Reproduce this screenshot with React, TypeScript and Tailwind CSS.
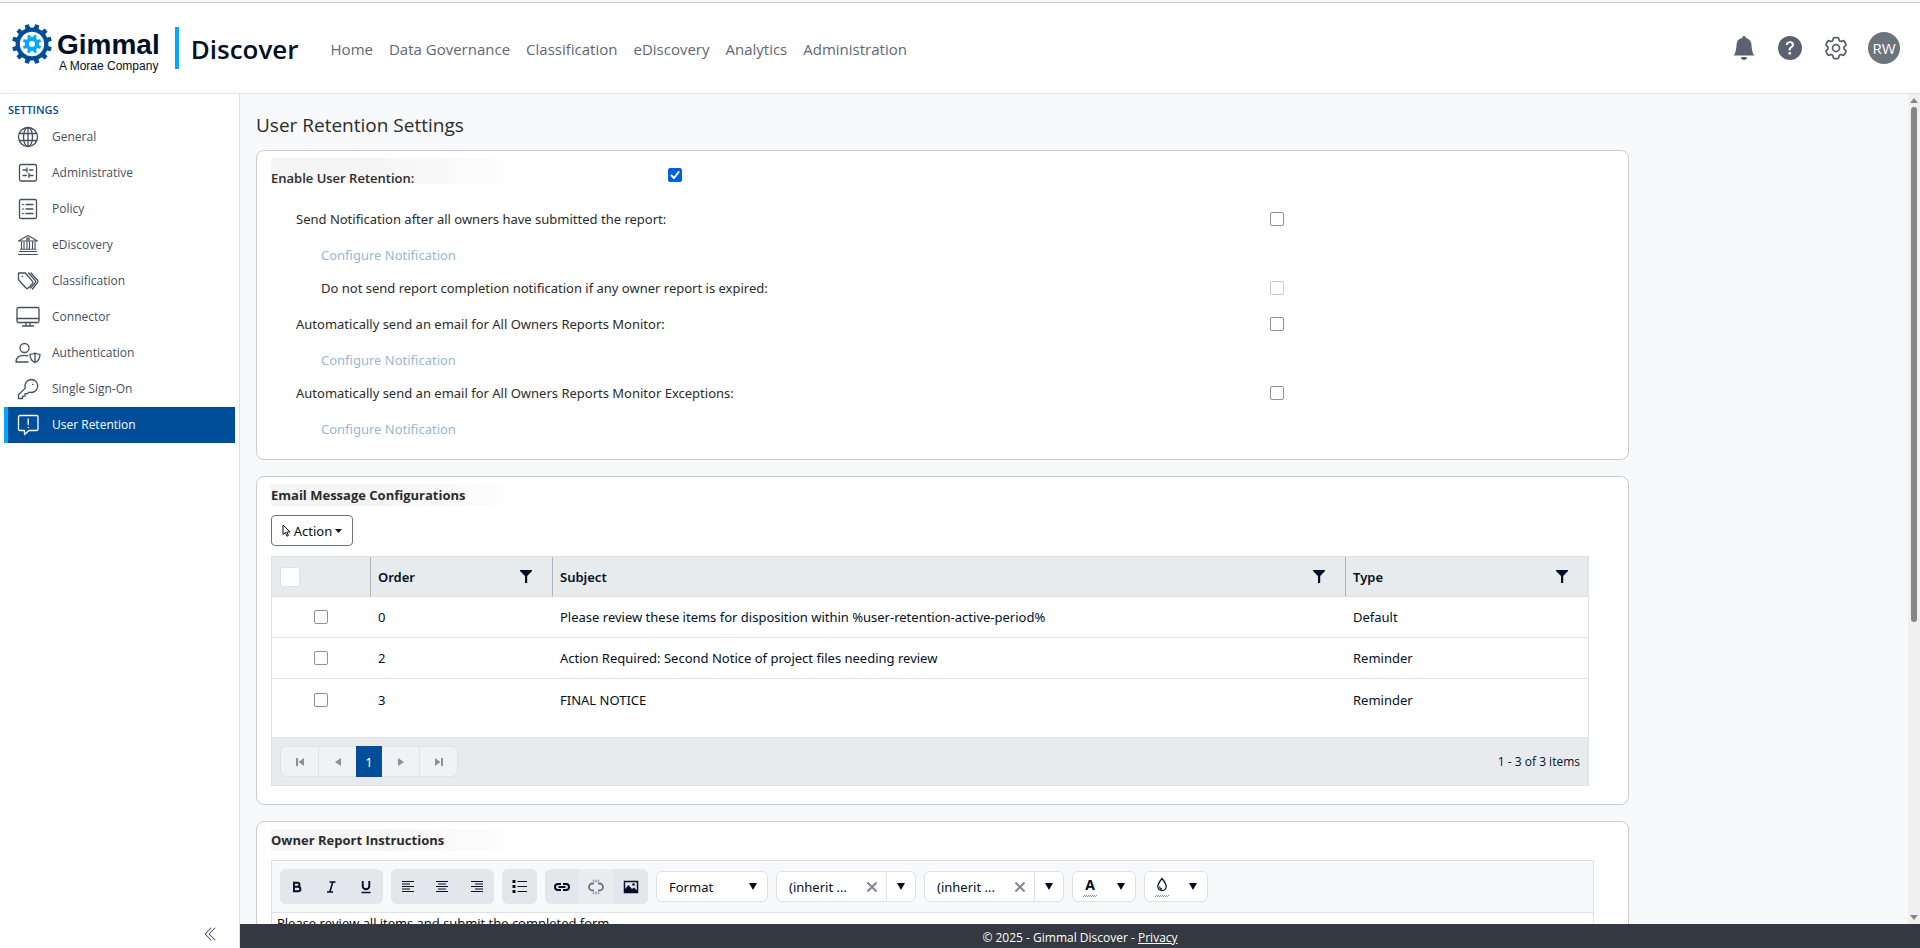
import type { ReactNode } from 'react';
import { BsBellFill, BsQuestionCircleFill, BsChevronDoubleLeft } from 'react-icons/bs';
import { HiOutlineCog6Tooth } from 'react-icons/hi2';

function gearPath(teeth: number, inner: number, outer: number, hole: number) {
  const step = (Math.PI * 2) / teeth;
  const at = (r: number, a: number) => `${(r * Math.cos(a)).toFixed(2)} ${(r * Math.sin(a)).toFixed(2)}`;
  let d = '';
  for (let i = 0; i < teeth; i++) {
    const a = i * step + step / 2;
    d += `${i === 0 ? 'M' : 'L'}${at(inner, a - step * 0.28)}L${at(outer, a - step * 0.2)}L${at(outer, a + step * 0.2)}L${at(inner, a + step * 0.28)}`;
  }
  return `${d}ZM${hole} 0A${hole} ${hole} 0 1 0 ${-hole} 0A${hole} ${hole} 0 1 0 ${hole} 0Z`;
}

function Logo() {
  return (
    <a href="#home" className="flex items-start gap-[5px] text-[#020f26]" aria-label="Gimmal">
      <svg className="h-10 w-10" viewBox="-20 -20 40 40" fillRule="evenodd">
        <path d={gearPath(12, 16.5, 20, 12.2)} fill="#004d99" />
        <path d={gearPath(8, 7, 9.4, 3)} fill="#00a8ff" />
      </svg>
      <span className="flex flex-col font-['Liberation_Sans',sans-serif]">
        <span className="pt-[6px] text-[28px] font-bold leading-[30px]">Gimmal</span>
        <span className="pl-[2px] text-[12px] leading-3">A Morae Company</span>
      </span>
    </a>
  );
}

function Line({ children, w = 24, h = 24 }: { children: ReactNode; w?: number; h?: number }) {
  return (
    <svg width={w} height={h} viewBox={`0 0 ${w} ${h}`} fill="none" stroke="currentColor" strokeWidth="1.3" strokeLinecap="round" strokeLinejoin="round">
      {children}
    </svg>
  );
}

const navItems: { label: string; icon: ReactNode; active?: boolean }[] = [
  {
    label: 'General',
    icon: (
      <Line>
        <circle cx="12" cy="12" r="9.5" />
        <ellipse cx="12" cy="12" rx="4.5" ry="9.5" />
        <path d="M12 2.5v19M3.5 8.5h17M3.5 15.5h17" />
      </Line>
    ),
  },
  {
    label: 'Administrative',
    icon: (
      <Line>
        <rect x="3.5" y="3.5" width="17" height="16.5" rx="1.5" />
        <path d="M7 9h4M11 7v4M13.5 9H17M7 14.5h3.5M13 12.5v4M13 14.5h4" />
      </Line>
    ),
  },
  {
    label: 'Policy',
    icon: (
      <Line>
        <rect x="3.5" y="2.5" width="17" height="19" rx="1.5" />
        <path d="M10 7.5h7M10 12h7M10 16.5h7M6.7 7.5h.5M6.7 12h.5M6.7 16.5h.5" />
      </Line>
    ),
  },
  {
    label: 'eDiscovery',
    icon: (
      <Line>
        <path d="M2.5 21.5h19M3.5 18.5h17M2.5 8 12 2.5 21.5 8zM5.5 9v7M8 9v7M11 9v7M13.5 9v7M16.5 9v7M19 9v7M4.5 16.2h4.5M10 16.2h4.5M15.5 16.2H20" strokeWidth="1.100" />
        <circle cx="12" cy="6" r="1.2" />
      </Line>
    ),
  },
  {
    label: 'Classification',
    icon: (
      <Line>
        <path d="M2.5 4.5v6.3l7.500 8.2a1.5 1.5 0 0 0 2.2 0l4.300-4.600a1.5 1.5 0 0 0 0-2L9.3 4H3a.5.500 0 0 0-.5.500zM12.500 4l6.800 7.600a1.5 1.5 0 0 1 0 2L14.500 19M15 4l6.500 7.300a2 2 0 0 1 0 2.400L16.500 20M6.200 7.400h.3" />
      </Line>
    ),
  },
  {
    label: 'Connector',
    icon: (
      <Line>
        <rect x="1" y="2.5" width="22" height="15" rx="1.5" />
        <path d="M1 13.5h22M10 17.5v3.2M14 17.5v3.2M6.5 21h11" />
      </Line>
    ),
  },
  {
    label: 'Authentication',
    icon: (
      <Line w={26}>
        <circle cx="9.5" cy="7" r="4.5" />
        <path d="M13 21H1c0-4.500 3-6.700 8-6.700 1.500 0 2.700.200 3.700.600M20 12c1.500 1 3.300 1.300 5 1.300 0 4-1.500 6.700-5 8.200-3.500-1.500-5-4.200-5-8.200 1.700 0 3.500-.300 5-1.300zM20 12v9.500" />
      </Line>
    ),
  },
  {
    label: 'Single Sign-On',
    icon: (
      <Line>
        <path d="M15 2.500a6.500 6.500 0 1 1-2 12.600l-1.600 1.600H9v2.400H6.600v2.400H2.500v-3.700l6.700-6.700A6.500 6.500 0 0 1 15 2.500zM16.600 7.400h.3" />
      </Line>
    ),
  },
  {
    label: 'User Retention',
    active: true,
    icon: (
      <Line>
        <path d="M4 2.500h16.500a1.500 1.500 0 0 1 1.500 1.500v12a1.500 1.500 0 0 1-1.500 1.500H13L8.500 21.500v-4H4A1.500 1.500 0 0 1 2.500 16V4A1.500 1.500 0 0 1 4 2.500zM12.200 6v5.500M12.200 14.300v.2" />
      </Line>
    ),
  },
];

function Check({ label, id, checked, disabled }: { label?: string; id?: string; checked?: boolean; disabled?: boolean }) {
  return (
    <span className="grid size-[14px] shrink-0">
      <input
        id={id}
        type="checkbox"
        aria-label={label}
        defaultChecked={checked}
        disabled={disabled}
        className="peer col-start-1 row-start-1 size-[14px] appearance-none rounded-[2px] border border-[#8f8f9d] bg-white checked:border-[#0060df] checked:bg-[#0060df] disabled:border-[#c7c7ce]"
      />
      <svg viewBox="0 0 14 14" className="pointer-events-none col-start-1 row-start-1 hidden size-[14px] peer-checked:block" fill="none" stroke="#fff" strokeWidth="2" strokeLinecap="round" strokeLinejoin="round">
        <path d="M3.500 7.500 6 10l4.700-6" />
      </svg>
    </span>
  );
}

function Card({ children, className }: { children: ReactNode; className: string }) {
  return <section className={`mb-4 max-w-[1373px] rounded-lg border border-[#cbccd2] bg-white px-[14px] pt-[7px] ${className}`}>{children}</section>;
}

function CardTitle({ children }: { children: ReactNode }) {
  return (
    <h2 className="mb-[9px] w-[270px] bg-linear-to-r from-[#f5f5f5] from-40% to-white to-95% font-['Open_Sans','Noto_Sans',sans-serif] font-bold leading-[22px]">{children}</h2>
  );
}

function SettingRow({ id, label, nested, disabled }: { id: string; label: string; nested?: boolean; disabled?: boolean }) {
  return (
    <div className={`grid h-[30px] grid-cols-[1fr_344px] items-center ${nested ? 'mt-[3px] pl-[50px]' : 'pl-[25px]'}`}>
      <label htmlFor={id}>{label}</label>
      <Check id={id} disabled={disabled} />
    </div>
  );
}

function ConfigureLink() {
  return (
    <div className="mt-[6px] flex h-[30px] items-center pl-[50px]">
      <a href="#configure" className="text-[#99b8d6]">Configure Notification</a>
    </div>
  );
}

function Funnel({ column }: { column: string }) {
  return (
    <button type="button" aria-label={`Filter ${column}`}>
      <svg width="12" height="13" viewBox="0 0 12 13" fill="currentColor">
        <path d="M0 0h12v1L7.200 6v7H5V6L0 1z" />
      </svg>
    </button>
  );
}

const messages = [
  { order: 0, subject: 'Please review these items for disposition within %user-retention-active-period%', type: 'Default' },
  { order: 2, subject: 'Action Required: Second Notice of project files needing review', type: 'Reminder' },
  { order: 3, subject: 'FINAL NOTICE', type: 'Reminder' },
];

function MessageTable() {
  return (
    <div className="mr-[25px] mt-[10px] border border-[#dee2e6] text-[#020f26]">
      <table className="w-full table-fixed border-separate border-spacing-0 text-left">
        <colgroup>
          <col className="w-[98px]" />
          <col className="w-[182px]" />
          <col />
          <col className="w-[243px]" />
        </colgroup>
        <thead className="bg-[#e8ebee]">
          <tr className="h-10">
            <th className="border-b border-[#dee2e6] pl-2">
              <input type="checkbox" aria-label="Select all messages" className="block size-5 appearance-none rounded-[2px] border border-[#dee2e6] bg-white" />
            </th>
            {['Order', 'Subject', 'Type'].map((c) => (
              <th key={c} className="border-b border-l border-b-[#dee2e6] border-l-[#adb5bd] pl-[7px] pr-5 font-semibold">
                <div className="flex items-center justify-between">
                  {c}
                  <Funnel column={c} />
                </div>
              </th>
            ))}
          </tr>
        </thead>
        <tbody>
          {messages.map((m, i) => {
            const line = i < messages.length - 1 ? 'border-b border-[#dee2e6]' : '';
            return (
              <tr key={m.order} className="h-[41px]">
                <td className={line}>
                  <div className="flex justify-center">
                    <Check label={`Select message ${m.order}`} />
                  </div>
                </td>
                <td className={`pl-2 ${line}`}>{m.order}</td>
                <td className={`pl-2 ${line}`}>{m.subject}</td>
                <td className={`pl-2 ${line}`}>{m.type}</td>
              </tr>
            );
          })}
        </tbody>
      </table>
      <div className="mt-[17px] flex h-12 items-center justify-between border-t border-[#dee2e6] bg-[#e8ebee] px-2">
        <div className="flex h-[31px] text-[#8b919b]">
          <PagerButton label="First page" className="w-[38px] rounded-l-md border-l"><path d="M1 1h2v8H1zM9 1v8L3.500 5z" /></PagerButton>
          <PagerButton label="Previous page" className="w-[38px] border-l"><path d="M8 1v8L2 5z" /></PagerButton>
          <button type="button" aria-current="page" className="w-[26px] bg-[#004d99] text-white">1</button>
          <PagerButton label="Next page" className="w-[37px]"><path d="M2 1v8l6-4z" /></PagerButton>
          <PagerButton label="Last page" className="w-[39px] rounded-r-md border-x"><path d="M7 1h2v8H7zM1 1v8l5.500-4z" /></PagerButton>
        </div>
        <span className="font-['Open_Sans','Noto_Sans',sans-serif] text-[12px]">1 - 3 of 3 items</span>
      </div>
    </div>
  );
}

function PagerButton({ label, className, children }: { label: string; className: string; children: ReactNode }) {
  return (
    <button type="button" aria-label={label} className={`flex items-center justify-center border-y border-[#dfe3e7] bg-[#f0f2f4] ${className}`}>
      <svg width="10" height="10" viewBox="0 0 10 10" fill="currentColor">{children}</svg>
    </button>
  );
}

function ToolGroup({ children }: { children: ReactNode }) {
  return <div className="flex h-[35px] overflow-hidden rounded-md bg-[#e3e6eb]">{children}</div>;
}

function Tool({ label, muted, children }: { label: string; muted?: boolean; children: ReactNode }) {
  return (
    <button type="button" aria-label={label} className={`flex w-[34px] items-center justify-center last:w-[35px] ${muted ? 'bg-[#eaecf0] text-[#6b7280]' : ''}`}>
      {children}
    </button>
  );
}

function Glyph({ children, stroke = '1.4' }: { children: ReactNode; stroke?: string }) {
  return (
    <svg width="16" height="16" viewBox="0 0 16 16" fill="none" stroke="currentColor" strokeWidth={stroke}>
      {children}
    </svg>
  );
}

function Caret() {
  return (
    <svg width="8" height="7" viewBox="0 0 8 7" fill="currentColor" className="shrink-0">
      <path d="M0 0h8L4 7z" />
    </svg>
  );
}

function Combo({ label }: { label: string }) {
  return (
    <div className="flex h-[31px] w-[140px] overflow-hidden rounded-md border border-[#dee2e6] bg-white">
      <input aria-label={label} defaultValue="(inherit ..." className="w-[80px] min-w-0 pl-3 outline-none" />
      <button type="button" aria-label={`Clear ${label}`} className="flex flex-1 items-center justify-center text-[#7f8793]">
        <svg width="10" height="10" viewBox="0 0 10 10" stroke="currentColor" strokeWidth="2"><path d="m.5.500 9 9M9.500.500l-9 9" /></svg>
      </button>
      <button type="button" aria-label={`Open ${label}`} className="flex w-[29px] items-center justify-center border-l border-[#dee2e6]"><Caret /></button>
    </div>
  );
}

function ColorTool({ label, children }: { label: string; children: ReactNode }) {
  return (
    <button type="button" aria-label={label} className="flex h-[31px] w-16 items-center justify-between rounded-md border border-[#dee2e6] bg-white px-[10px]">
      <span className="flex flex-col items-center">
        {children}
        <svg width="14" height="2" viewBox="0 0 14 2" stroke="#8b919b"><path d="M0 1.500h14" strokeDasharray="1 1" /><path d="M1 .5h13" strokeDasharray="1 1" /></svg>
      </span>
      <Caret />
    </button>
  );
}

function EditorToolbar() {
  return (
    <div role="toolbar" aria-label="Formatting" className="flex h-[52px] items-center gap-2 border-b border-[#dee2e6] bg-[#f8f9fb] px-2">
      <ToolGroup>
        <Tool label="Bold"><Glyph stroke="2"><path d="M5 3.800h3.500a1.900 1.900 0 0 1 0 3.900H5zM5 7.700h4.100a2.200 2.200 0 0 1 0 4.500H5z" /></Glyph></Tool>
        <Tool label="Italic"><Glyph><path d="M6.500 3h6M4 13h6M9.800 3 6.800 13" strokeWidth="1.600" /></Glyph></Tool>
        <Tool label="Underline"><Glyph><path d="M4.700 2v5a3.300 3.300 0 0 0 6.600 0V2" strokeWidth="1.900" /><path d="M3.500 13.500h9" /></Glyph></Tool>
      </ToolGroup>
      <ToolGroup>
        <Tool label="Align left"><Glyph stroke="1.200"><path d="M2 2.500h12M2 5h8M2 7.500h12M2 10h8M2 12.500h12" /></Glyph></Tool>
        <Tool label="Align center"><Glyph stroke="1.200"><path d="M2 2.500h12M4 5h8M2 7.500h12M4 10h8M2 12.500h12" /></Glyph></Tool>
        <Tool label="Align right"><Glyph stroke="1.200"><path d="M2 2.500h12M6 5h8M2 7.500h12M6 10h8M2 12.500h12" /></Glyph></Tool>
      </ToolGroup>
      <ToolGroup>
        <Tool label="Bulleted list">
          <Glyph>
            <path d="M5.500 2.500H15M5.500 7.500H15M5.500 12.500H15" strokeWidth="1.200" />
            <path d="M.5 2.500h3M.5 7.500h3M.5 12.500h3" strokeWidth="2.800" />
          </Glyph>
        </Tool>
      </ToolGroup>
      <ToolGroup>
        <Tool label="Insert link"><Glyph stroke="2"><path d="M7 11H4a3 3 0 0 1 0-6h3M9 5h3a3 3 0 0 1 0 6H9M4.500 8h7" /></Glyph></Tool>
        <Tool label="Remove link" muted><Glyph stroke="1.800"><path d="M6 11.500H4.500a3.500 3.500 0 0 1 0-7H6M10 4.500h1.500a3.500 3.500 0 0 1 0 7H10" /><path d="M8 .5v3M8 12.500v3M5 .8l1 2M11 .8l-1 2M5 15.200l1-2M11 15.200l-1-2" strokeWidth="1" /></Glyph></Tool>
        <Tool label="Insert image"><Glyph stroke="1.500"><rect x="1.500" y="2.500" width="13" height="11" /><path d="M2 13v-3l3.500-4 3.500 4 2-1.500 3 3V13z" fill="currentColor" stroke="none" /><circle cx="10.500" cy="5.500" r="1.300" fill="currentColor" stroke="none" /></Glyph></Tool>
      </ToolGroup>
      <div className="grid h-[31px] w-28 items-center rounded-md border border-[#dee2e6] bg-white">
        <select aria-label="Format" className="col-start-1 row-start-1 appearance-none pl-3 outline-none">
          <option>Format</option>
        </select>
        <span className="pointer-events-none col-start-1 row-start-1 mr-[10px] justify-self-end"><Caret /></span>
      </div>
      <Combo label="Font name" />
      <Combo label="Font size" />
      <ColorTool label="Text color"><span className="h-[18px] text-[14px] font-bold leading-[16px]">A</span></ColorTool>
      <ColorTool label="Background color">
        <svg width="14" height="18" viewBox="0 0 14 18" fill="none" stroke="currentColor" strokeWidth="1.200">
          <path d="M7 1.500c2.700 3.300 4.200 5.700 4.200 7.900a4.200 4.200 0 0 1-8.400 0C2.800 7.200 4.300 4.800 7 1.500zM4.500 9.500a3 3 0 0 0 2.500 2.700" />
        </svg>
      </ColorTool>
    </div>
  );
}

export default function App() {
  return (
    <div className="flex h-screen flex-col overflow-hidden bg-white font-['Open_Sans','Noto_Sans',sans-serif] text-[13px] leading-5 text-[#2b2b2b]">
      <div className="h-[3px] shrink-0 border-b border-[#cccccc] bg-[#f8f8f8]" />
      <header className="flex h-[91px] shrink-0 items-start justify-between border-b border-[#dee2e6] pl-3 pr-5">
        <div className="flex">
          <div className="flex pt-[21px]"><Logo /></div>
          <div className="ml-[15px] mt-6 h-[42px] w-1 bg-[#00a8ff]" />
          <span className="ml-3 mt-[27px] text-[26px] font-semibold leading-[38px] text-[#020f26]">Discover</span>
          <nav className="ml-8 mt-[34px] flex gap-4 text-[15px] leading-6 text-[#5f6776]">
            {['Home', 'Data Governance', 'Classification', 'eDiscovery', 'Analytics', 'Administration'].map((t) => (
              <a key={t} href={`#${t}`}>{t}</a>
            ))}
          </nav>
        </div>
        <div className="mt-[29px] flex items-center gap-[22px] text-[#5a6272]">
          <button type="button" aria-label="Notifications"><BsBellFill size={24} /></button>
          <button type="button" aria-label="Help"><BsQuestionCircleFill size={24} /></button>
          <button type="button" aria-label="Settings" className="-ml-[2px] -mr-1"><HiOutlineCog6Tooth size={28} /></button>
          <button type="button" aria-label="Account" className="size-8 rounded-full bg-[#6c757d] text-[15px] text-white">RW</button>
        </div>
      </header>

      <div className="flex min-h-0 flex-1">
        <aside className="flex w-60 shrink-0 flex-col border-r border-[#dee2e6]">
          <h2 className="px-2 pt-[7px] text-[11px] font-semibold leading-[18px] text-[#004d99]">SETTINGS</h2>
          <nav className="flex flex-col px-1 text-[12px] text-[#454f5f]">
            {navItems.map((n) => (
              <a
                key={n.label}
                href={`#${n.label}`}
                className={`flex h-9 items-center border-l-4 ${n.active ? 'border-[#00a8ff] bg-[#004d99] text-white' : 'border-transparent'}`}
              >
                <span className="flex w-10 justify-center">{n.icon}</span>
                <span className="ml-1">{n.label}</span>
              </a>
            ))}
          </nav>
          <button type="button" aria-label="Collapse sidebar" className="mb-[6px] mr-5 mt-auto self-end text-[#454f5f]">
            <BsChevronDoubleLeft size={16} />
          </button>
        </aside>

        <div className="flex min-w-0 flex-1 flex-col">
          <div className="flex min-h-0 flex-1 bg-[#f8f9fb]">
            <main className="min-w-0 flex-1 overflow-y-auto px-4 pt-4 font-['Noto_Sans','Open_Sans',sans-serif] [scrollbar-width:none]">
              <h1 className="mb-[10px] font-['Open_Sans','Noto_Sans',sans-serif] text-[19px] leading-[30px]">User Retention Settings</h1>

              <Card className="pb-[15px]">
                <div className="flex">
                  <div className="flex h-[26px] w-[270px] items-center bg-linear-to-r from-[#f5f5f5] from-40% to-white to-95% pt-[14px]">
                    <label htmlFor="enable" className="font-['Open_Sans','Noto_Sans',sans-serif] font-semibold">Enable User Retention:</label>
                  </div>
                  <div className="ml-[127px] mt-[10px]"><Check id="enable" checked /></div>
                </div>
                <div className="mt-5">
                  <SettingRow id="notify" label="Send Notification after all owners have submitted the report:" />
                  <ConfigureLink />
                  <SettingRow id="expired" nested disabled label="Do not send report completion notification if any owner report is expired:" />
                  <div className="mt-[6px]"><SettingRow id="monitor" label="Automatically send an email for All Owners Reports Monitor:" /></div>
                  <ConfigureLink />
                  <div className="mt-[3px]"><SettingRow id="exceptions" label="Automatically send an email for All Owners Reports Monitor Exceptions:" /></div>
                  <ConfigureLink />
                </div>
              </Card>

              <Card className="pb-[18px]">
                <CardTitle>Email Message Configurations</CardTitle>
                <button type="button" className="flex h-[31px] w-[82px] items-center justify-center gap-[3px] rounded border border-[#6c757d] text-[#020f26]">
                  <svg width="9" height="13" viewBox="0 0 9 13" fill="none" stroke="currentColor" strokeLinejoin="round"><path d="M1 1v9.500l2.300-2 1.600 3.700 1.500-.700-1.600-3.500H8z" /></svg>
                  Action
                  <svg width="7" height="4" viewBox="0 0 7 4" fill="currentColor"><path d="M0 0h7L3.500 4z" /></svg>
                </button>
                <MessageTable />
              </Card>

              <Card className="pb-5">
                <CardTitle>Owner Report Instructions</CardTitle>
                <div className="mr-5 border border-[#dee2e6] text-[#020f26]">
                  <EditorToolbar />
                  <div role="textbox" aria-label="Owner report instructions" className="min-h-[200px] px-[5px] font-['Open_Sans','Noto_Sans',sans-serif] text-black">
                    Please review all items and submit the completed form
                  </div>
                </div>
              </Card>
            </main>
            <div aria-hidden="true" className="flex w-3 shrink-0 flex-col items-center bg-[#f0f0f0] py-1 text-[#858585]">
              <svg width="8" height="5" viewBox="0 0 8 5" fill="currentColor"><path d="M4 0l4 5H0z" /></svg>
              <div className="my-1 min-h-0 w-[6px] flex-1"><div className="h-[64%] rounded-full bg-[#858585]" /></div>
              <svg width="8" height="5" viewBox="0 0 8 5" fill="currentColor"><path d="M0 0h8L4 5z" /></svg>
            </div>
          </div>
          <footer className="h-6 shrink-0 bg-[#343840] pt-1 text-center text-[12px] text-white">
            © 2025 - Gimmal Discover - <a href="#privacy" className="underline">Privacy</a>
          </footer>
        </div>
      </div>
    </div>
  );
}
